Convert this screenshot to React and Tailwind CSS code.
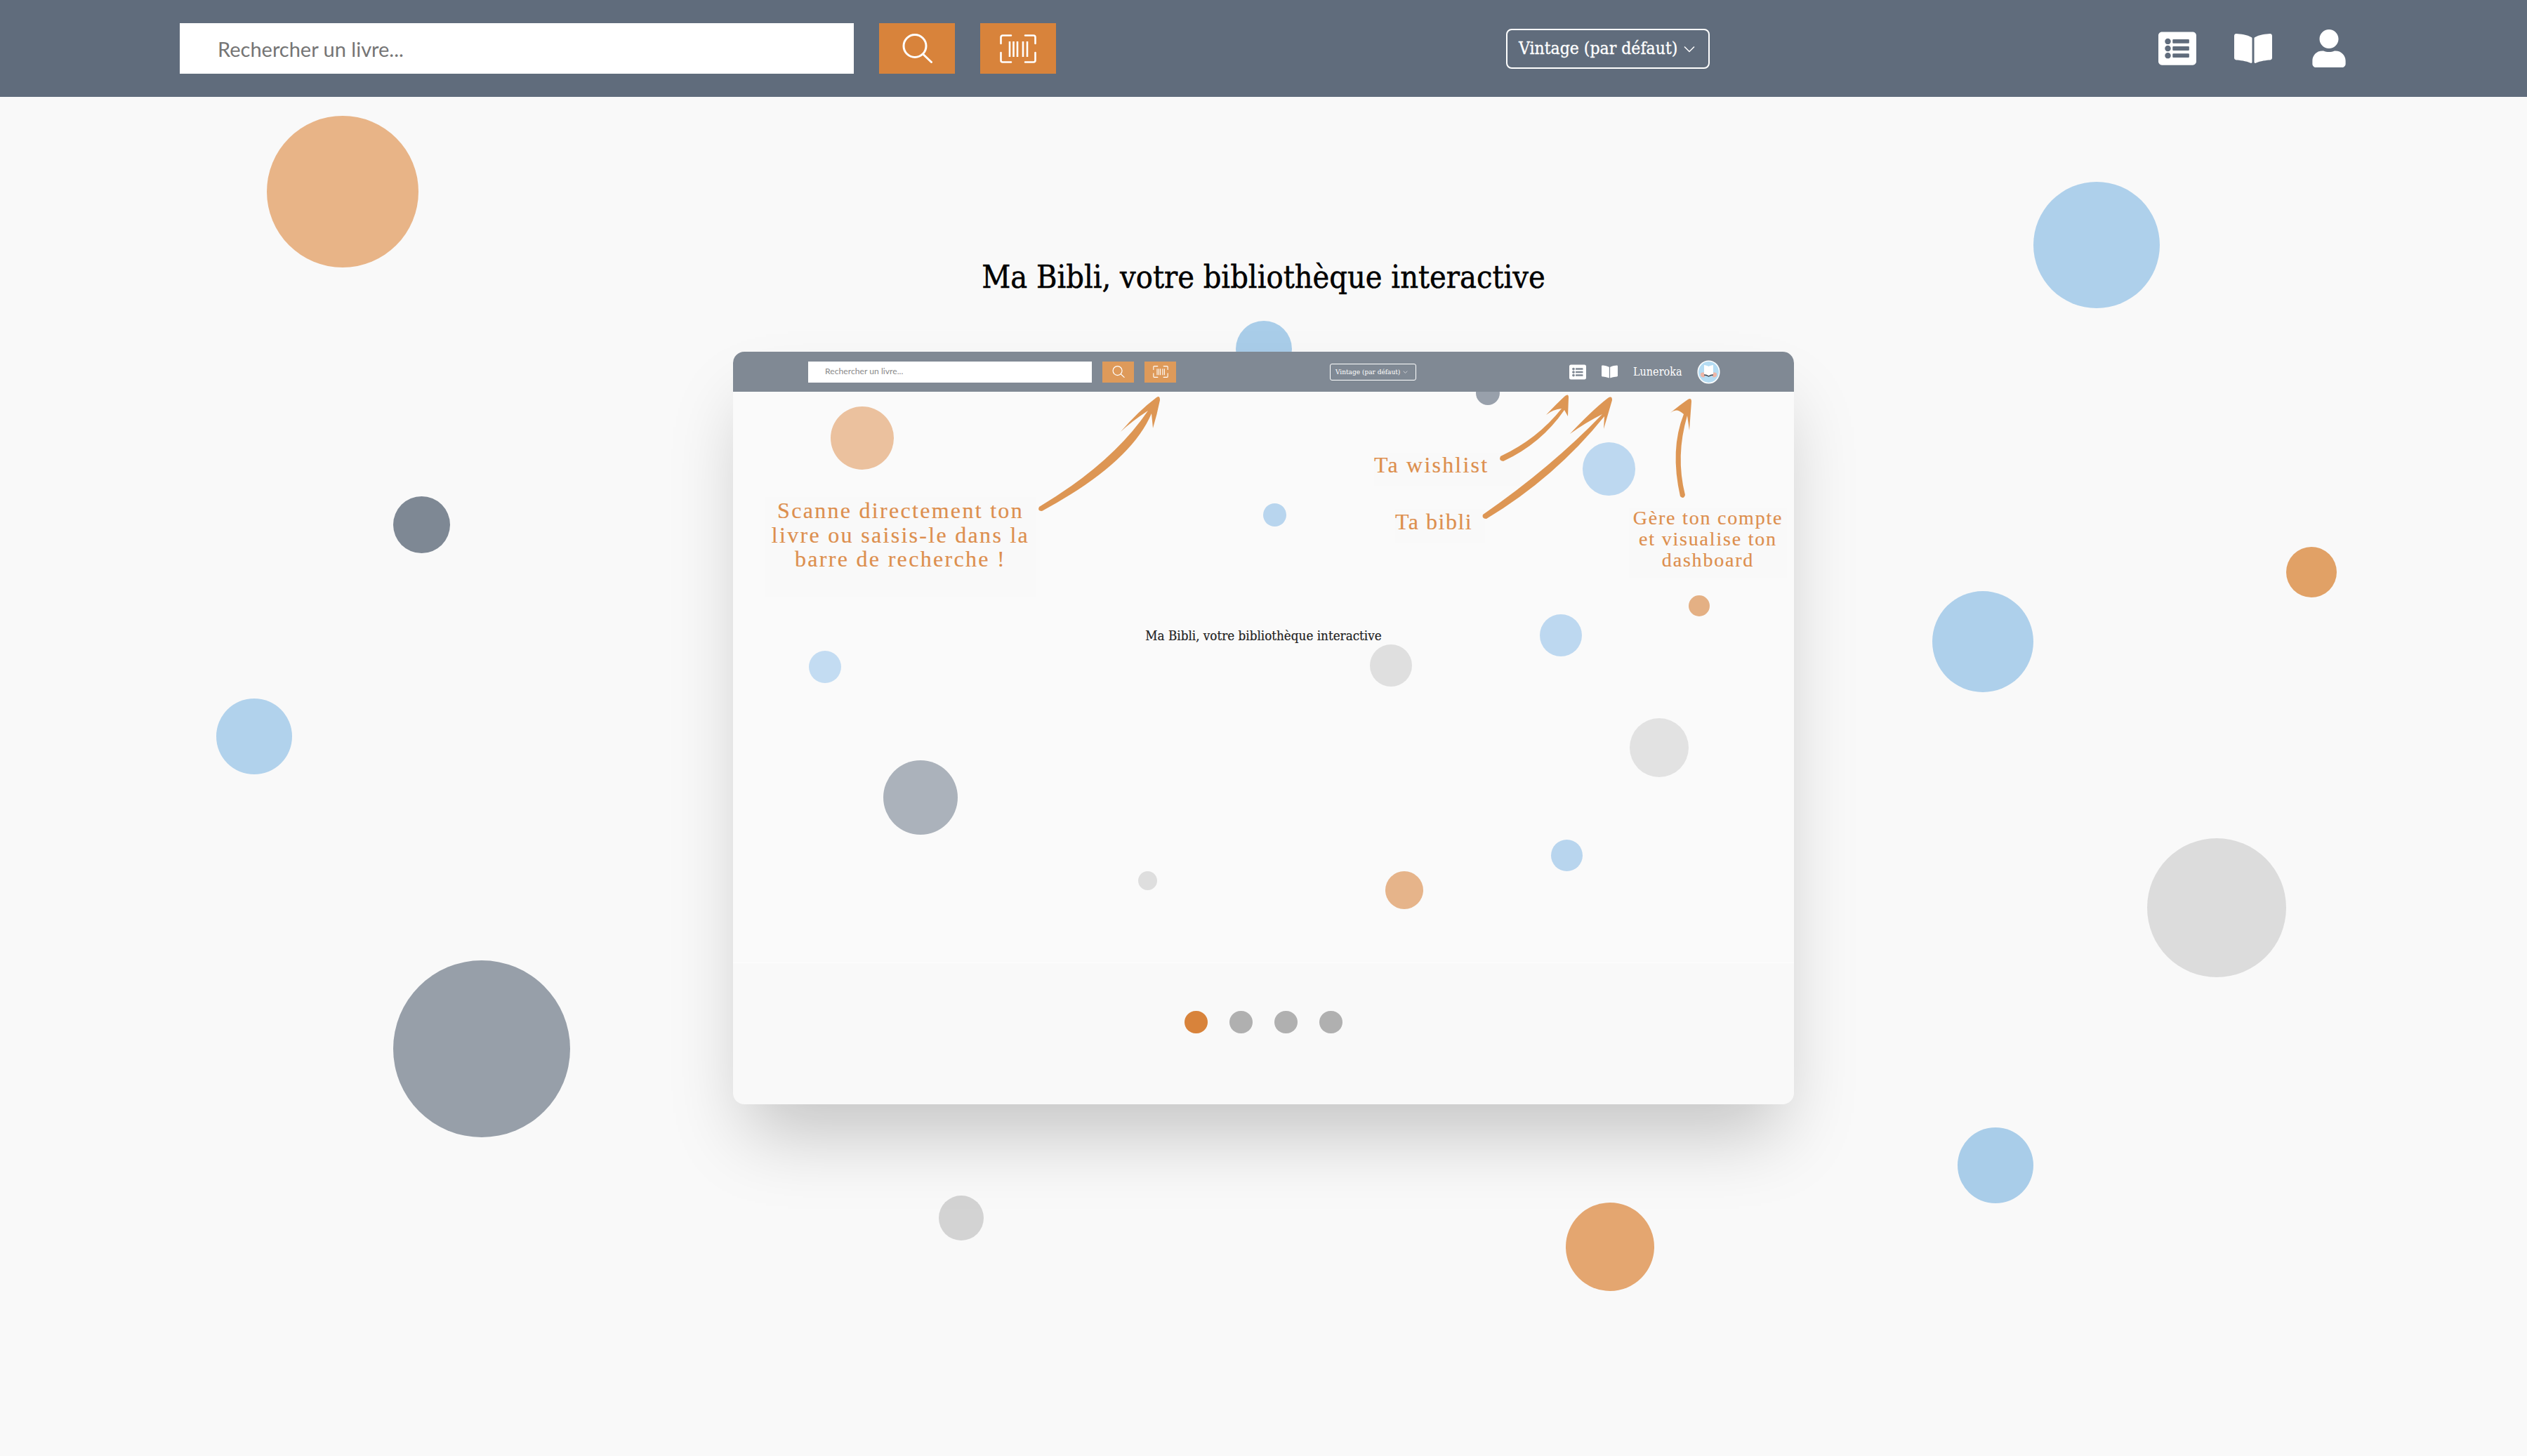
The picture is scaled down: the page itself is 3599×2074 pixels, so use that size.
import React from "react";
import { FaListAlt, FaBookOpen, FaUser } from "react-icons/fa";

const serif = "[font-family:'DejaVu_Serif_Condensed','DejaVu_Serif',serif]";
const hand = "[font-family:'Liberation_Serif',serif] [-webkit-text-stroke:0.2px_#dd8f4e]";

function SearchIcon({ className }) {
  return (
    <svg viewBox="0 0 43 42" fill="none" stroke="currentColor" strokeWidth="3" strokeLinecap="round" className={className}>
      <circle cx="18" cy="17.5" r="16" />
      <line x1="30" y1="29.5" x2="41.5" y2="40.5" />
    </svg>
  );
}

function ScanIcon({ className }) {
  return (
    <svg viewBox="0 0 52 41" fill="none" stroke="currentColor" strokeWidth="2.6" strokeLinecap="round" className={className}>
      <path d="M1.5 13V4a2.5 2.5 0 0 1 2.5-2.5H16M36 1.5H48a2.5 2.5 0 0 1 2.5 2.5V13M1.5 26V37a2.5 2.5 0 0 0 2.5 2.5H16M36 39.5H48a2.5 2.5 0 0 0 2.5-2.5V26" />
      <path strokeLinecap="butt" d="M14 10V32M19.5 10V32M25 10V32M33 10V32M39 10V32" />
    </svg>
  );
}

function Avatar() {
  return (
    <svg viewBox="0 0 33 34" className="h-[34px] w-[33px]">
      <ellipse cx="16.5" cy="17" rx="16" ry="16.5" fill="#ffffff" />
      <ellipse cx="16.5" cy="17" rx="14.5" ry="15" fill="#b5dcf3" />
      <path d="M5 19c2-2 5-2 6 0v5c-3 1-5 0-6-2zM28 19c-2-2-5-2-6 0v5c3 1 5 0 6-2z" fill="#eeb5a6" />
      <path d="M10 7c2 0 5 1 6.500 2 1.500-1 4.500-2 6.500-2v14c-2 0-5 1-6.500 2-1.500-1-4.500-2-6.500-2z" fill="#ffffff" />
      <path d="M10 21c2 0 5 1 6.500 2 1.500-1 4.500-2 6.500-2" fill="none" stroke="#3d4650" strokeWidth="1.400" />
    </svg>
  );
}

export default function App() {
  return (
    <div className="relative h-[2074px] w-full overflow-hidden bg-[#f9f9f9]">
      <div className="absolute left-[380px] top-[165px] h-[216px] w-[216px] rounded-full bg-[#e8b487]" />
      <div className="absolute left-[560px] top-[707px] h-[81px] w-[81px] rounded-full bg-[#7e8894]" />
      <div className="absolute left-[308px] top-[995px] h-[108px] w-[108px] rounded-full bg-[#b1d2ec]" />
      <div className="absolute left-[560px] top-[1368px] h-[252px] w-[252px] rounded-full bg-[#979fa9]" />
      <div className="absolute left-[1337px] top-[1703px] h-[64px] w-[64px] rounded-full bg-[#d3d3d3]" />
      <div className="absolute left-[2230px] top-[1713px] h-[126px] w-[126px] rounded-full bg-[#e4a670]" />
      <div className="absolute left-[2788px] top-[1606px] h-[108px] w-[108px] rounded-full bg-[#a9cde9]" />
      <div className="absolute left-[3058px] top-[1194px] h-[198px] w-[198px] rounded-full bg-[#dcdcdc]" />
      <div className="absolute left-[2752px] top-[842px] h-[144px] w-[144px] rounded-full bg-[#aed0eb]" />
      <div className="absolute left-[3256px] top-[779px] h-[72px] w-[72px] rounded-full bg-[#e1a166]" />
      <div className="absolute left-[2896px] top-[259px] h-[180px] w-[180px] rounded-full bg-[#aed0eb]" />
      <div className="absolute left-[1760px] top-[457px] h-[80px] w-[80px] rounded-full bg-[#a9cde9]" />

      <header className="relative flex h-[138px] items-center bg-[#606c7c] pl-[256px] pr-[258px]">
        <div className="flex h-[72px] w-[960px] items-center bg-white pl-[54px] pt-[2px] [font-family:'Lato',sans-serif] text-[29px] text-[#757575]">
          Rechercher un livre...
        </div>
        <button className="ml-[36px] flex h-[72px] w-[108px] items-center justify-center bg-[#d8833b] text-white">
          <SearchIcon className="h-[42px] w-[43px]" />
        </button>
        <button className="ml-[36px] flex h-[72px] w-[108px] items-center justify-center bg-[#d8833b] text-white">
          <ScanIcon className="h-[41px] w-[52px]" />
        </button>
        <div className={`ml-[641px] flex h-[57px] w-[290px] items-center gap-[9px] rounded-[8px] border-2 border-white pl-[16px] text-[24.500px] text-white [-webkit-text-stroke:0.3px_white] ${serif}`}>
          Vintage (par défaut)
          <svg viewBox="0 0 16 10" fill="none" stroke="currentColor" strokeWidth="1.500" className="mt-[2px] h-[10px] w-[16px]">
            <path d="M1 1.500l7 7 7-7" />
          </svg>
        </div>
        <div className="ml-auto flex items-center text-white">
          <FaListAlt className="h-[54px] w-[54px]" />
          <FaBookOpen className="ml-[54px] h-[48px] w-[54px]" />
          <FaUser className="ml-[57px] h-[54px] w-[48px]" />
        </div>
      </header>

      <main className="relative flex flex-col items-center pt-[224px]">
        <h1 className={`mb-[73px] h-[66px] text-[44.600px] font-normal leading-[66px] text-black [-webkit-text-stroke:0.5px_black] ${serif}`}>
          Ma Bibli, votre bibliothèque interactive
        </h1>

        <section className="relative h-[1072px] w-[1511px] rounded-[16px] bg-[#f9f9f9] shadow-[0_60px_100px_-20px_rgba(0,0,0,0.22)]">
          <div className="relative z-10 flex h-[57px] items-center rounded-t-[16px] bg-[#808994] pl-[107px] pr-[105px]">
            <div className="flex h-[30px] w-[404px] items-center bg-white pl-[24px] [font-family:'Lato',sans-serif] text-[12.200px] text-[#8a8a8a]">
              Rechercher un livre...
            </div>
            <div className="ml-[15px] flex h-[30px] w-[45px] items-center justify-center bg-[#de9a5a] text-white">
              <SearchIcon className="h-[17px] w-[18px]" />
            </div>
            <div className="ml-[15px] flex h-[30px] w-[45px] items-center justify-center bg-[#de9a5a] text-white">
              <ScanIcon className="h-[17px] w-[22px]" />
            </div>
            <div className={`ml-[219px] flex h-[24px] w-[123px] items-center gap-[4px] rounded-[3px] border border-white pl-[7px] text-[10px] text-white ${serif}`}>
              Vintage (par défaut)
              <svg viewBox="0 0 16 10" fill="none" stroke="currentColor" strokeWidth="1.500" className="h-[4px] w-[7px]">
                <path d="M1 1.500l7 7 7-7" />
              </svg>
            </div>
            <div className="ml-auto flex items-center text-white">
              <FaListAlt className="h-[24px] w-[24px]" />
              <FaBookOpen className="ml-[22px] h-[21px] w-[23px]" />
              <span className={`ml-[22px] w-[70px] text-[16px] ${serif}`}>Luneroka</span>
              <span className="ml-[21px] flex"><Avatar /></span>
            </div>
          </div>

          <div className="relative h-[813px] bg-[#fafafa] pt-[336px] text-center">
            <div className="absolute left-[139px] top-[21px] h-[90px] w-[90px] rounded-full bg-[#ebc19e]" />
            <div className="absolute left-[1058px] top-[-15px] h-[34px] w-[34px] rounded-full bg-[#98a0ab]" />
            <div className="absolute left-[1210px] top-[72px] h-[76px] w-[75px] rounded-full bg-[#bdd8f0]" />
            <div className="absolute left-[1361px] top-[290px] h-[30px] w-[30px] rounded-full bg-[#e4b084]" />
            <div className="absolute left-[1149px] top-[317px] h-[60px] w-[60px] rounded-full bg-[#bdd8f0]" />
            <div className="absolute left-[907px] top-[360px] h-[60px] w-[60px] rounded-full bg-[#dfdfdf]" />
            <div className="absolute left-[755px] top-[159px] h-[33px] w-[33px] rounded-full bg-[#b8d5ee]" />
            <div className="absolute left-[108px] top-[369px] h-[46px] w-[46px] rounded-full bg-[#c3dcf2]" />
            <div className="absolute left-[1277px] top-[465px] h-[84px] w-[84px] rounded-full bg-[#e2e2e2]" />
            <div className="absolute left-[214px] top-[525px] h-[106px] w-[106px] rounded-full bg-[#abb2bb]" />
            <div className="absolute left-[577px] top-[683px] h-[27px] w-[27px] rounded-full bg-[#dedede]" />
            <div className="absolute left-[929px] top-[683px] h-[54px] w-[54px] rounded-full bg-[#e6b48a]" />
            <div className="absolute left-[1165px] top-[638px] h-[45px] w-[45px] rounded-full bg-[#b8d5ee]" />
            <p className={`relative text-[18.700px] leading-[24px] text-[#222222] [-webkit-text-stroke:0.2px_#222222] ${serif}`}>
              Ma Bibli, votre bibliothèque interactive
            </p>
          </div>

          <div className="flex justify-center gap-[31px] border-t border-[#fdfdfd] pt-[68px]">
            <span className="h-[32px] w-[33px] rounded-full bg-[#d8833b]" />
            <span className="h-[32px] w-[33px] rounded-full bg-[#b0b0b0]" />
            <span className="h-[32px] w-[33px] rounded-full bg-[#b0b0b0]" />
            <span className="h-[32px] w-[33px] rounded-full bg-[#b0b0b0]" />
          </div>

          <div className={`absolute left-[45px] top-[207px] w-[387px] bg-[#f9f9f9] pb-[36px] pt-[2px] text-center text-[32px] leading-[34.500px] tracking-[2.300px] text-[#dd8f4e] ${hand}`}>
            Scanne directement ton<br />livre ou saisis-le dans la<br />barre de recherche !
          </div>
          <div className={`absolute left-[913px] top-[144px] h-[48px] w-[208px] bg-[#f9f9f9] text-[32px] leading-[34px] tracking-[2.200px] text-[#dd8f4e] ${hand}`}>
            Ta wishlist
          </div>
          <div className={`absolute left-[943px] top-[224px] h-[48px] w-[128px] bg-[#f9f9f9] text-[32px] leading-[36px] tracking-[1.500px] text-[#dd8f4e] ${hand}`}>
            Ta bibli
          </div>
          <div className={`absolute left-[1276px] top-[222px] w-[225px] bg-[#f9f9f9] pb-[10px] text-center text-[28px] leading-[30px] tracking-[1.800px] text-[#dd8f4e] ${hand}`}>
            Gère ton compte<br />et visualise ton<br />dashboard
          </div>

          <svg viewBox="1044 501 1511 1072" fill="#dd9654" className="absolute inset-0 z-20 h-[1072px] w-[1511px]">
            <path d="M1480 722Q1584 660 1635 585Q1612 600 1596 615Q1622 585 1646 567Q1652 562 1652 570Q1648 590 1642 610L1640 589Q1610 660 1484 728Q1477 728 1480 722Z" />
            <path d="M2137 650Q2190 625 2224 582Q2212 583 2202 591Q2218 574 2229 564Q2234 560 2234 566L2233 593L2228 584Q2195 632 2141 657Q2134 656 2137 650Z" />
            <path d="M2112 733Q2210 665 2282 590Q2258 602 2236 618Q2268 584 2290 567Q2296 563 2296 570L2284 611L2285 593Q2215 680 2117 739Q2110 739 2112 733Z" />
            <path d="M2393 707Q2378 640 2398 590Q2388 580 2379 588Q2395 575 2404 569Q2409 566 2409 572L2406 613L2403 592Q2386 650 2400 705Q2398 712 2393 707Z" />
          </svg>
        </section>
      </main>
    </div>
  );
}
